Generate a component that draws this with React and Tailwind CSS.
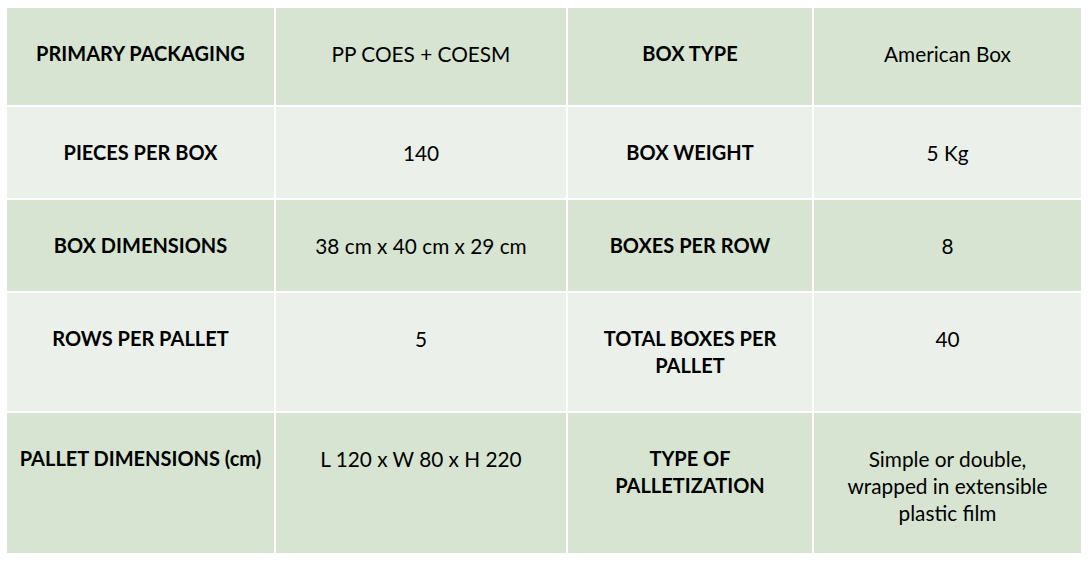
import React from 'react';

const rows = [
  { h: 'h-[97px]', bg: 'bg-[#d6e4d1]', cells: ['PRIMARY PACKAGING', 'PP COES + COESM', 'BOX TYPE', 'American Box'] },
  { h: 'h-[91px]', bg: 'bg-[#ebf0ea]', cells: ['PIECES PER BOX', '140', 'BOX WEIGHT', '5 Kg'] },
  { h: 'h-[91px]', bg: 'bg-[#d6e4d1]', cells: ['BOX DIMENSIONS', '38 cm x 40 cm x 29 cm', 'BOXES PER ROW', '8'] },
  { h: 'h-[118px]', bg: 'bg-[#ebf0ea]', cells: ['ROWS PER PALLET', '5', 'TOTAL BOXES PER PALLET', '40'] },
  {
    h: 'h-[140px]',
    bg: 'bg-[#d6e4d1]',
    cells: ['PALLET DIMENSIONS (cm)', 'L 120 x W 80 x H 220', 'TYPE OF PALLETIZATION', 'Simple or double, wrapped in extensible plastic film'],
  },
];

const App = () => {
  return (
    <div className="w-[1090px] h-[564px] bg-white pt-[8px] pl-[7px] font-['Lato',sans-serif] leading-[27px] text-black">
      <div className="grid grid-cols-[267px_290px_244px_267px] gap-[2px] w-[1074px]">
        {rows.map((row, i) =>
          row.cells.map((cell, j) => (
            <div
              key={i + '-' + j}
              className={`${row.h} ${row.bg} pt-[32px] px-2 text-center ${j % 2 === 0 ? 'font-bold text-[20px]' : 'text-[20.8px]'}`}
            >
              {j === 3 && i === 4 ? (
                <>
                  Simple or double,
                  <br />
                  wrapped in extensible
                  <br />
                  plastic film
                </>
              ) : j === 2 && i === 3 ? (
                <>
                  TOTAL BOXES PER
                  <br />
                  PALLET
                </>
              ) : j === 2 && i === 4 ? (
                <>
                  TYPE OF
                  <br />
                  PALLETIZATION
                </>
              ) : (
                cell
              )}
            </div>
          ))
        )}
      </div>
    </div>
  );
};

export default App;
